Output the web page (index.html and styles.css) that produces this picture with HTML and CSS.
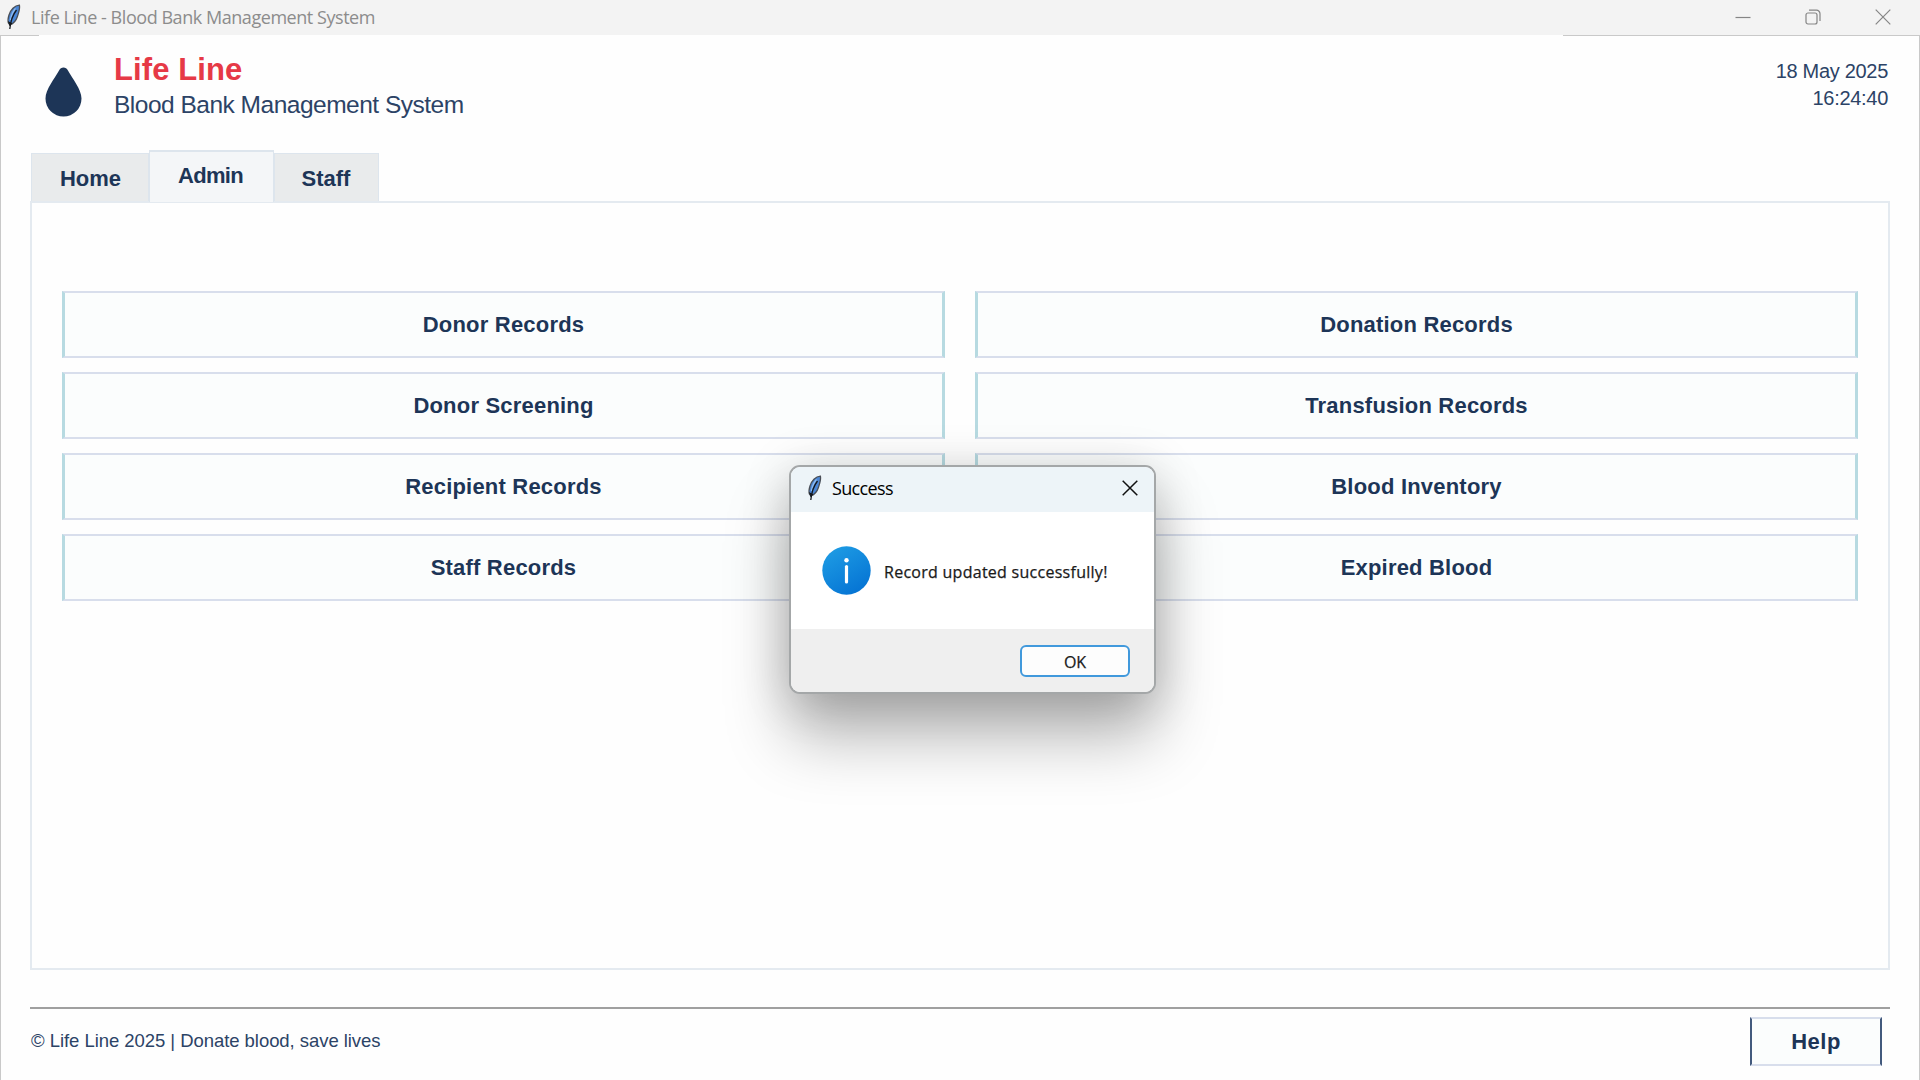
FILE: index.html
```html
<!DOCTYPE html>
<html lang="en">
<head>
<meta charset="utf-8">
<title>Life Line - Blood Bank Management System</title>
<link rel="stylesheet" href="styles.css">
</head>
<body>
<svg width="0" height="0" class="defs" aria-hidden="true">
  <symbol id="feather" viewBox="0 0 16 26">
    <path d="M13.4 1.2C8.5 1.4 4.6 6 3 11c-1 3-1.300 6-.6 8l1.500 2c3.600-1.500 6.300-4.600 7.500-8.500C12.500 9 14.200 5 13.400 1.200Z" fill="#4a86d6" stroke="#4a4f57" stroke-width="1.300"/>
    <path d="M9.500 4.500C6.500 8 5 12 4.300 16" fill="none" stroke="#8fbcf0" stroke-width="1.200"/>
    <path d="M10.500 6C7 10.500 4.700 16 3.800 25" fill="none" stroke="#15181d" stroke-width="1.300"/>
    <path d="M2.600 17.500l1.300 4 2-2.500" fill="#15181d" stroke="#15181d" stroke-width="1"/>
  </symbol>
</svg>
<div class="window">
  <header class="titlebar">
    <svg class="feather"><use href="#feather"/></svg>
    <span class="titlebar-text">Life Line - Blood Bank Management System</span>
    <div class="controls">
      <svg width="16" height="16" viewBox="0 0 16 16"><path d="M0.500 8.500h15"/></svg>
      <svg width="16" height="16" viewBox="0 0 16 16"><rect x="1" y="4" width="11" height="11" rx="2"/><path d="M4 1.200h7.500a3.500 3.500 0 0 1 3.500 3.500V12"/></svg>
      <svg width="16" height="16" viewBox="0 0 16 16"><path d="M.7.700l14.600 14.600M15.300.7L.7 15.300"/></svg>
    </div>
  </header>
  <div class="edge"><i></i><i></i></div>
  <section class="brand">
    <svg class="drop" width="37" height="50" viewBox="0 0 37 50"><path d="M18.500.5c-2 0-3.300 1-4.300 2.700C9.500 11.500.5 22.500.5 31.500a18 18 0 0 0 36 0c0-9-9-20-13.700-28.300C21.800 1.500 20.500.5 18.500.5Z" fill="#1d3557"/></svg>
    <div class="names"><h1>Life Line</h1><p>Blood Bank Management System</p></div>
    <div class="clock"><div>18 May 2025</div><div>16:24:40</div></div>
  </section>
  <nav class="tabs">
    <span class="tab home">Home</span><span class="tab active">Admin</span><span class="tab staff">Staff</span>
  </nav>
  <main class="panel">
    <button>Donor Records</button><button>Donation Records</button>
    <button>Donor Screening</button><button>Transfusion Records</button>
    <button>Recipient Records</button><button>Blood Inventory</button>
    <button>Staff Records</button><button>Expired Blood</button>
  </main>
  <footer class="footer">
    <span class="copy">© Life Line 2025 | Donate blood, save lives</span>
    <button class="help">Help</button>
  </footer>
</div>
<div class="dialog" role="dialog">
  <div class="dialog-title">
    <svg class="feather"><use href="#feather"/></svg>
    <span>Success</span>
    <svg class="close" width="16" height="16" viewBox="0 0 16 16"><path d="M.7.700l14.600 14.600M15.300.7L.7 15.300"/></svg>
  </div>
  <div class="dialog-body">
    <svg width="49" height="49" viewBox="0 0 49 49">
      <defs><linearGradient id="info" x1="0.200" y1="0" x2="0.800" y2="1"><stop offset="0" stop-color="#1e9ce4"/><stop offset="1" stop-color="#0472d3"/></linearGradient></defs>
      <circle cx="24.500" cy="24.500" r="24.200" fill="url(#info)"/>
      <circle cx="24.500" cy="14.300" r="2.200" fill="#fff"/><path d="M24.500 20.500v15.500" stroke="#fff" stroke-width="3.200" stroke-linecap="round"/>
    </svg>
    <span>Record updated successfully!</span>
  </div>
  <div class="dialog-actions"><button class="ok">OK</button></div>
</div>
</body>
</html>
```
FILE: styles.css
```css
* { box-sizing: border-box; }
body { margin: 0; background: #fff; font-family: "Liberation Sans", Arial, sans-serif; color: #1d3557; overflow: hidden; }
button { font: inherit; color: inherit; padding: 0; }
.defs { position: absolute; }
.window { width: 1920px; height: 1080px; display: flex; flex-direction: column; background: #fefefe; border: 1px solid #c9c9c9; border-top: 0; border-bottom: 0; }
.titlebar { height: 35px; flex: none; background: #f3f3f3; display: flex; align-items: center; padding: 0 29px 0 6px; margin: 0 -1px; color: #8c8c8c; font-family: "Open Sans", "Noto Sans", sans-serif; }
.feather { width: 16px; height: 26px; flex: none; }
.titlebar .feather { margin-top: -1px; }
.titlebar-text { font-size: 18px; letter-spacing: -0.45px; margin: -2px 0 0 9px; white-space: nowrap; }
.controls { margin-left: auto; display: flex; gap: 54px; margin-top: -2px; }
.controls svg { fill: none; stroke: #858585; stroke-width: 1.2; }
.edge { height: 1px; flex: none; display: flex; justify-content: space-between; }
.edge i { width: 38px; background: #c9c9c9; }
.edge i:last-child { width: 356px; }
.brand { display: flex; height: 114px; flex: none; padding: 0 31px 0 44px; }
.drop { margin-top: 31px; flex: none; }
.names { margin-left: 32px; padding-top: 15px; white-space: nowrap; }
h1 { margin: 0; font-size: 31px; line-height: 37px; color: #e63946; letter-spacing: 0.1px; }
p { margin: 0; font-size: 24.5px; line-height: 34px; letter-spacing: -0.5px; color: #2c4366; }
.clock { margin-left: auto; padding-top: 22px; font-size: 20px; line-height: 27px; text-align: right; letter-spacing: -0.3px; color: #2c4366; }
.tabs { height: 51px; flex: none; display: flex; align-items: flex-end; padding-left: 30px; }
.tab { height: 48px; border: 1px solid #dde5ed; border-bottom: 0; background: #e9ebec; font-weight: 700; font-size: 22px; line-height: 49px; text-align: center; }
.home { width: 118px; padding-left: 1px; }
.active { width: 125px; height: 52px; line-height: 48px; background: #f4f6f8; margin-bottom: -1px; border-width: 2px 1px 0; z-index: 1; letter-spacing: -0.7px; padding-right: 2px; }
.staff { width: 105px; padding-right: 1px; }
.panel { height: 769px; flex: none; margin: 0 29px; border: 2px solid #e4eaf0; padding: 88px 30px 0; display: grid; grid-template-columns: 883px 883px; grid-auto-rows: 67px; gap: 14px 30px; }
.panel button, .help { font-weight: 700; font-size: 22px; letter-spacing: 0.2px; background: #fbfdfd; border: solid #d8deec; border-width: 2px 3px; border-left-color: #b7dae1; border-right-color: #b7dae1; }
.footer { margin: 37px 29px 0; border-top: 2px solid #a0a0a0; display: flex; align-items: flex-start; justify-content: space-between; padding-right: 8px; }
.copy { font-size: 18.5px; line-height: 24px; margin-top: 20px; padding-left: 1px; white-space: nowrap; color: #2c4366; letter-spacing: -0.05px; }
.panel .help, .help { width: 132px; height: 49px; margin-top: 8px; border-left-color: #435a7d; border-right-color: #435a7d; border-width: 2px; letter-spacing: 0.5px; }
.dialog { position: absolute; left: 789px; top: 465px; width: 367px; height: 229px; border: 2px solid #a4a7a8; border-radius: 11px; overflow: hidden; background: #fff; color: #1a1a1a; display: flex; flex-direction: column; font-family: "Open Sans", "Noto Sans", sans-serif; box-shadow: 0 44px 64px rgba(0,0,0,.28), 0 6px 48px rgba(0,0,0,.18); }
.dialog-title { height: 45px; flex: none; background: #edf4f8; display: flex; align-items: center; padding: 0 16px 3px; font-size: 18px; letter-spacing: -0.65px; color: #000; }
.dialog-title span { margin-left: 9px; }
.close { margin-left: auto; fill: none; stroke: #111; stroke-width: 1.5; }
.dialog-body { height: 117px; flex: none; display: flex; align-items: center; padding: 0 0 0 31px; font-size: 16px; letter-spacing: 0.27px; white-space: nowrap; -webkit-text-stroke: 0.25px #1a1a1a; }
.dialog-body span { margin: 2px 0 0 13px; }
.dialog-actions { flex: 1; background: #efefef; padding: 16px 24px; display: flex; justify-content: flex-end; }
.ok { width: 110px; height: 32px; border: 2px solid #4199dc; border-radius: 6px; background: #fdfdfd; font-size: 16px; padding-top: 2px; -webkit-text-stroke: 0.25px #1a1a1a; }
```
